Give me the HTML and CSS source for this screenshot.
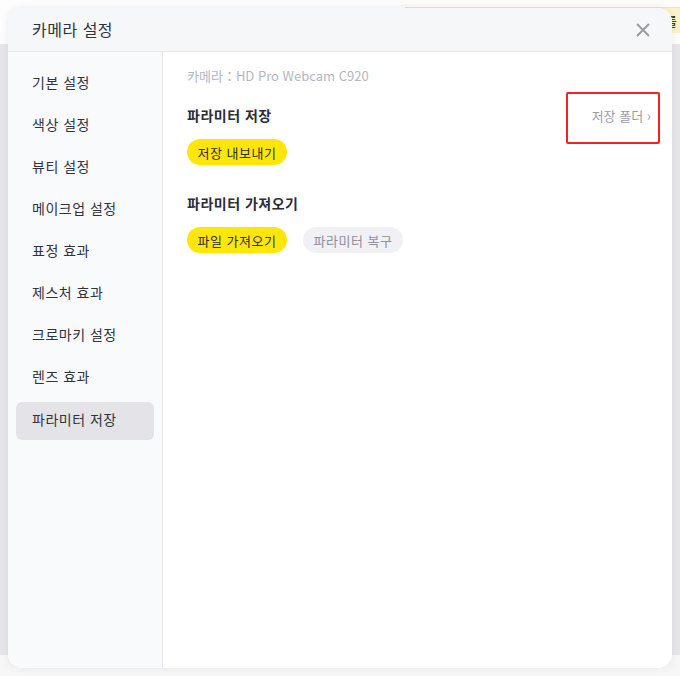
FILE: index.html
```html
<!DOCTYPE html>
<html lang="ko">
<head>
    <meta charset="UTF-8">
    <meta name="viewport" content="width=device-width, initial-scale=1.0">
    <title>카메라 설정</title>
    <link rel="stylesheet" href="styles.css">
</head>
<body>

    <div class="app">
        <div class="app-top"></div>
        <div class="app-body"></div>
        <div class="app-bottom"></div>
        <div class="notice">를</div>
    </div>

    <div class="modal">
        <div class="modal-header">
            <span class="modal-title">카메라 설정</span>
            <svg class="close" width="16" height="16" viewBox="0 0 16 16">
                <path d="M2 2 L14 14 M14 2 L2 14" stroke="#9a9ca4" stroke-width="2" fill="none"/>
            </svg>
        </div>

        <div class="modal-main">
            <ul class="menu">
                <li>기본 설정</li>
                <li>색상 설정</li>
                <li>뷰티 설정</li>
                <li>메이크업 설정</li>
                <li>표정 효과</li>
                <li>제스처 효과</li>
                <li>크로마키 설정</li>
                <li>렌즈 효과</li>
                <li class="active">파라미터 저장</li>
            </ul>

            <div class="content">
                <div class="camera-name">카메라：HD Pro Webcam C920</div>

                <div class="section">
                    <div class="section-head">
                        <span class="section-title">파라미터 저장</span>
                        <span class="folder-link">저장 폴더 <span class="arrow">›</span></span>
                    </div>
                    <div class="btn-row">
                        <button class="btn btn-yellow">저장 내보내기</button>
                    </div>
                </div>

                <div class="section">
                    <div class="section-head">
                        <span class="section-title">파라미터 가져오기</span>
                    </div>
                    <div class="btn-row">
                        <button class="btn btn-yellow">파일 가져오기</button>
                        <button class="btn btn-grey">파라미터 복구</button>
                    </div>
                </div>

                <div class="highlight"></div>
            </div>
        </div>
    </div>

</body>
</html>
```

FILE: styles.css
```css
*{
    box-sizing: border-box;
}

body{
    margin: 0;
    width: 680px;
    height: 676px;
    overflow: hidden;
    font-family: "Noto Sans CJK KR", "Noto Sans", sans-serif;
    color: #2b2d36;
}

.app{
    display: flex;
    flex-direction: column;
    height: 676px;
}

.app-top{
    height: 44px;
    background: #fdfdfd;
}

.app-body{
    flex: 1;
    background: #e7e7eb;
}

.app-bottom{
    height: 21px;
    background: #f7f7f8;
}

.notice{
    position: absolute;
    top: 7px;
    left: 405px;
    width: 290px;
    height: 26px;
    background: #fcf3c8;
    border-top: 1px solid #f3e7a6;
    font-size: 13px;
    line-height: 26px;
    text-align: right;
    padding-right: 18px;
    color: #222;
}

.modal{
    position: absolute;
    top: 8px;
    left: 8px;
    width: 664px;
    height: 660px;
    border-radius: 14px;
    background: #fff;
    overflow: hidden;
    display: flex;
    flex-direction: column;
    box-shadow: 0 0 10px rgba(0, 0, 0, 0.08);
}

.modal-header{
    height: 44px;
    flex-shrink: 0;
    background: #f6f7f9;
    border-bottom: 1px solid #e6e7eb;
    display: flex;
    align-items: center;
    justify-content: space-between;
    padding: 0 21px 0 24px;
}

.modal-title{
    font-size: 16px;
    color: #30323c;
    letter-spacing: 0.5px;
    margin-top: -2px;
}

.close{
    display: block;
}

.modal-main{
    flex: 1;
    display: flex;
}

.menu{
    list-style: none;
    margin: 0;
    padding: 11px 8px;
    width: 155px;
    background: #f9fafc;
    border-right: 1px solid #e8e9ed;
}

.menu li{
    height: 42px;
    line-height: 38px;
    padding-left: 16px;
    font-size: 14px;
    color: #30323c;
    letter-spacing: 0.5px;
}

.menu li.active{
    height: 38px;
    line-height: 34px;
    margin-top: 3px;
    background: #e4e4e8;
    border-radius: 6px;
}

.content{
    flex: 1;
    position: relative;
    padding: 14px 24px;
}

.camera-name{
    font-size: 13px;
    color: #b4b6c2;
    line-height: 20px;
}

.section{
    margin-top: 19px;
}

.section + .section{
    margin-top: 28px;
}

.section-head{
    display: flex;
    justify-content: space-between;
    align-items: center;
    height: 20px;
}

.section-title{
    font-size: 14px;
    font-weight: bold;
    color: #2b2d36;
    letter-spacing: 0.5px;
}

.folder-link{
    font-size: 13px;
    color: #9a9ca6;
    margin-right: -3px;
}

.arrow{
    font-size: 14px;
}

.btn-row{
    display: flex;
    gap: 16px;
    margin-top: 14px;
}

.btn{
    height: 26px;
    width: 100px;
    border: none;
    border-radius: 13px;
    font-family: inherit;
    font-size: 13px;
    letter-spacing: 0.5px;
    padding: 0;
}

.btn-yellow{
    background: #ffe60a;
    color: #2b2d36;
}

.btn-grey{
    background: #f0f0f5;
    color: #8e909a;
}

.highlight{
    position: absolute;
    top: 40px;
    left: 403px;
    width: 94px;
    height: 52px;
    border: 2px solid #f0231e;
    border-radius: 2px;
}
```
